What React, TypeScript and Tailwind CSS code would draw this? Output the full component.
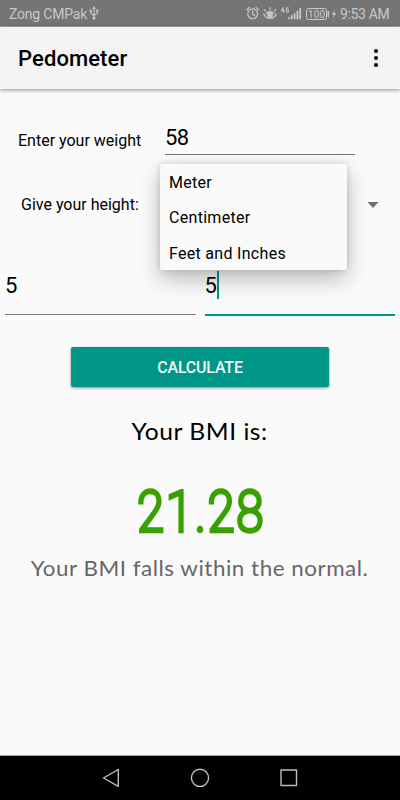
const UNITS = ["Meter", "Centimeter", "Feet and Inches"];

const StatusBar = () => {
  return (
    <div className="flex items-center h-[27px] bg-[#757575] border-b border-[#a5a5a5] text-[#c8c8c8] text-sm pl-[9px] pr-[11px] pt-px">
      <span className="w-[77px] whitespace-nowrap text-[14px] tracking-[-0.2px]">Zong CMPak</span>
      <svg className="ml-[3px] shrink-0 -mt-px" width="10" height="14" viewBox="0 0 10 14" fill="none" stroke="currentColor" strokeWidth="1.1">
        <path d="M5 2v9.500M1.700 5v2.300L5 9.600M8.300 5v2.300L5 9.600" />
        <path d="M5 0 6.800 3H3.200z" fill="currentColor" stroke="none" />
        <circle cx="1.700" cy="4.800" r="1.200" fill="currentColor" stroke="none" />
        <path d="M7.200 3.700h2.200v2.200H7.200z" fill="currentColor" stroke="none" />
        <circle cx="5" cy="11.900" r="1.500" fill="currentColor" stroke="none" />
      </svg>
      <svg className="ml-auto shrink-0" width="92" height="16" viewBox="0 0 92 16" fill="none" stroke="currentColor" strokeWidth="1.3" strokeLinecap="round">
        <circle cx="6.700" cy="7.800" r="4.900" />
        <path d="M6.700 5v3.100l2 1.300M1 3.800l2.500-2.400M12.400 3.800 9.900 1.400" />
        <path d="M17.800 8c2.200 5.800 10.200 5.800 12.400 0M20 7.400c2-2.400 6-2.400 8 0M19.500 4.900l-1.200-1.300M24 3.500V1.700M28.500 4.900l1.200-1.300" />
        <circle cx="24" cy="8.900" r="2.300" fill="currentColor" />
        <path d="M37 1.500 35.300 5h2.900M37.500 3.200V6.300M42.300 1.900h-1.900v4.200h2V4.100h-.8" strokeWidth="1" />
        <path d="M43 11.300v1.900M45.800 9.300v3.900M48.600 7.200v6M51.400 4.700v8.500M54.200 1.900v11.300" strokeWidth="1.800" strokeLinecap="butt" />
        <rect x="60.500" y="2.500" width="20" height="11" rx="1.800" strokeWidth="1" />
        <path d="M82.300 5.500v5" strokeWidth="1.500" />
        <text x="61.900" y="11.600" fontSize="10" textLength="17.300" fill="currentColor" stroke="none">100</text>
        <path d="M88.800 3.500 85.800 8.600h2l-1 4.200 3.300-5.700h-2.200z" fill="currentColor" stroke="none" />
      </svg>
      <span className="ml-[2px] w-[49px] whitespace-nowrap text-[14px] tracking-[-0.35px]">9:53 AM</span>
    </div>
  );
};

const NavBar = () => {
  return (
    <div className="h-[45px] bg-black border-t border-[#9da1a2] flex justify-center">
      <svg width="240" height="44" viewBox="0 0 240 44" fill="none" stroke="#bdbdbd" strokeWidth="1.400" strokeLinejoin="round">
        <path d="M38.300 13.500v16.800L23.500 22z" />
        <circle cx="120" cy="21.800" r="8.600" />
        <rect x="201" y="14" width="15.500" height="15.500" />
      </svg>
    </div>
  );
};

const App = () => {
  return (
    <div className="w-[400px] h-[800px] flex flex-col overflow-hidden bg-[#fafafa] text-black font-['Roboto',sans-serif]">
      <StatusBar />
      <header className="relative h-[62px] shrink-0 flex items-center justify-between bg-[#f4f4f4] pl-[18px] pr-[22px] shadow-[0_1px_4px_rgba(0,0,0,0.45)]">
        <h1 className="text-[22px] font-medium leading-none pt-[2px] tracking-[0.1px]">Pedometer</h1>
        <div className="flex flex-col gap-[3px] -mt-px">
          <i className="size-[4px] rounded-full bg-black" />
          <i className="size-[4px] rounded-full bg-black" />
          <i className="size-[4px] rounded-full bg-black" />
        </div>
      </header>

      <main className="flex-1 flex flex-col items-center">
        <div className="w-full h-[66px] flex pl-[18px]">
          <label className="w-[147px] pt-[40px] text-base">Enter your weight</label>
          <div className="w-[190px] border-b border-[#7a7a7a] pt-[34px] text-[22px] leading-[30px] tracking-[-0.5px]">58</div>
        </div>
        <div className="relative w-full h-[96px] flex items-center pl-[21px] pr-[21px] pt-[3px]">
          <span className="text-base">Give your height:</span>
          <svg className="ml-auto" width="12" height="6" viewBox="0 0 12 6">
            <path d="M0.500 0h11L6 6z" fill="#707070" />
          </svg>
          <ul className="absolute z-10 left-[160px] top-[9px] w-[187px] h-[106px] flex flex-col rounded-[2px] bg-[#fafafa] text-base tracking-[0.3px] shadow-[0_9px_22px_rgba(0,0,0,0.26),0_0_6px_rgba(0,0,0,0.15)]">
            {UNITS.map((unit) => (
              <li key={unit} className="h-[35.500px] shrink-0 flex items-center pl-[9px] pt-[2px]">
                {unit}
              </li>
            ))}
          </ul>
        </div>
        <div className="w-full h-[66px] flex gap-[9px] px-[5px] text-[22px] leading-[30px]">
          <div className="flex-1 h-[64px] pt-[20px] border-b border-[#7a7a7a]">5</div>
          <div className="flex-1 h-[65px] pt-[20px] border-b-2 border-[#009688] flex items-start">
            5<span className="w-[2px] h-[28px] bg-[#009688]" />
          </div>
        </div>

        <button className="mt-[30px] w-[258px] h-[40px] pt-[2px] rounded-[2px] bg-[#009688] text-[#f4fafa] text-base font-medium tracking-[-0.2px] shadow-[0_1px_3px_rgba(0,0,0,0.45)]">
          CALCULATE
        </button>
        <p className="mt-[28px] text-[23px] leading-[32px] tracking-[0.5px] scale-x-[1.07] font-['Lato',sans-serif]">Your BMI is:</p>
        <p className="mt-[32px] text-[55px] leading-[66px] font-thin text-[#38a100] tracking-[3px] -mr-[3px] scale-x-[0.87] [-webkit-text-stroke:4.500px_#38a100] [stroke-linejoin:round]">
          21.28
        </p>
        <p className="mt-[7px] text-[21px] leading-[32px] tracking-[0.5px] scale-x-[1.065] text-[#666] whitespace-nowrap font-['Lato',sans-serif]">
          Your BMI falls within the normal.
        </p>
      </main>
      <NavBar />
    </div>
  );
};

export default App;
